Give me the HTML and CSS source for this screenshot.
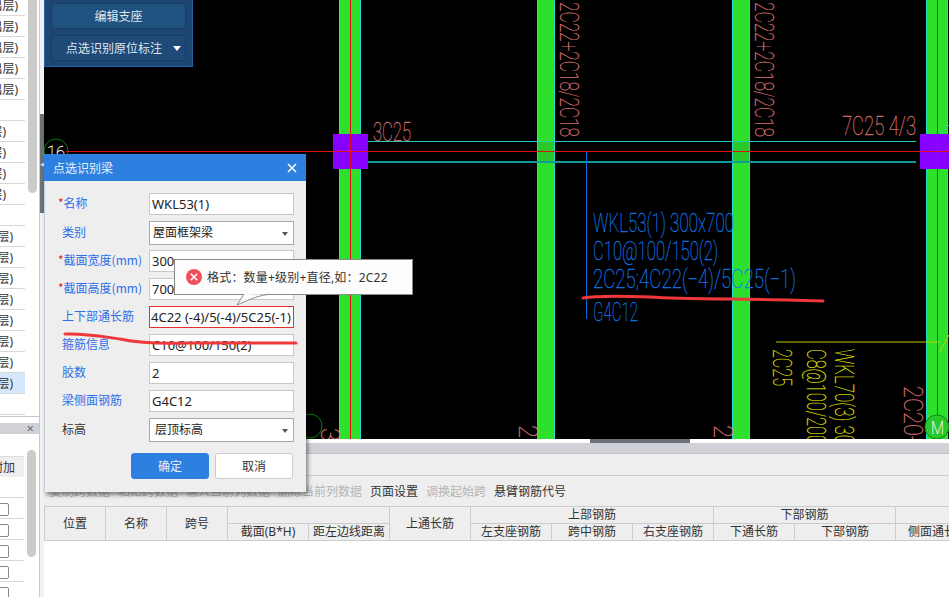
FILE: index.html

```html
<!DOCTYPE html>
<html lang="zh-CN">
<head>
  <meta charset="UTF-8">
  <title>点选识别梁</title>
  <link rel="stylesheet" href="styles.css">
</head>
<body>
  <div class="app">
    <aside class="sidebar">
      <div class="side-col">
        <div class="floor-box">
          <div class="floor-list">
            <div class="floor far">(出层)</div>
            <div class="floor far">(出层)</div>
            <div class="floor far">(出层)</div>
            <div class="floor far">(出层)</div>
            <div class="floor far">(出层)</div>
            <div class="floor"></div>
            <div class="floor near">(层)</div>
            <div class="floor near">(层)</div>
            <div class="floor near">(层)</div>
            <div class="floor near">(层)</div>
            <div class="floor"></div>
            <div class="floor mid">(层)</div>
            <div class="floor mid">(层)</div>
            <div class="floor mid">(层)</div>
            <div class="floor mid">(层)</div>
            <div class="floor mid">(层)</div>
            <div class="floor mid">(层)</div>
            <div class="floor mid">(层)</div>
            <div class="floor mid selected">(层)</div>
            <div class="floor"></div>
          </div>
          <div class="side-scroll top"></div>
        </div>
        <div class="panel-title"><span>×</span></div>
        <div class="extra-box">
          <div class="extra-list">
            <div class="extra-head">附加</div>
            <div class="extra-row"></div>
            <div class="extra-row"><i class="check"></i></div>
            <div class="extra-row"><i class="check"></i></div>
            <div class="extra-row"><i class="check"></i></div>
            <div class="extra-row"><i class="check"></i></div>
            <div class="extra-row"><i class="check"></i></div>
          </div>
          <div class="side-scroll bottom"></div>
        </div>
      </div>
      <div class="splitter"><div class="splitter-handle">◂</div></div>
    </aside>

    <main class="main">
      <div class="canvas">
        <svg class="cad" viewBox="44 0 905 439" width="905" height="439">
          <!-- columns -->
          <g class="col">
            <rect x="339.5" y="-2" width="21" height="445"/>
            <rect x="537.5" y="-2" width="17" height="445"/>
            <rect x="732.5" y="-2" width="17" height="445"/>
            <rect x="926.5" y="-2" width="21" height="445"/>
          </g>
          <g class="col-band">
            <rect x="538" y="142" width="16" height="20"/>
            <rect x="733" y="142" width="16" height="20"/>
          </g>
          <line class="beam-top" x1="368" y1="141.5" x2="916" y2="141.5"/>
          <line class="beam-bottom" x1="368" y1="162" x2="916" y2="162"/>
          <line class="axis" x1="66" y1="151.5" x2="949" y2="151.5"/>
          <line class="axis" x1="350.5" y1="0" x2="350.5" y2="439"/>
          <line class="axis" x1="937.5" y1="0" x2="937.5" y2="439"/>
          <rect class="pier" x="333" y="134" width="35" height="35"/>
          <rect class="pier" x="920" y="134" width="35" height="35"/>
          <line class="axis" x1="333" y1="151.5" x2="368" y2="151.5"/>
          <line class="axis" x1="920" y1="151.5" x2="949" y2="151.5"/>
          <line class="axis" x1="350.5" y1="134" x2="350.5" y2="169"/>
          <line class="axis" x1="937.5" y1="134" x2="937.5" y2="169"/>
          <line class="beam-top" x1="940" y1="134" x2="949" y2="125"/>

          <circle class="ring" cx="56" cy="151" r="12"/>
          <text class="cad-white" x="47" y="159" textLength="18" lengthAdjust="spacingAndGlyphs">16</text>
          <circle class="ring" cx="310" cy="426" r="12"/>

          <!-- rebar text -->
          <text class="cad-red" x="373" y="141" textLength="38" lengthAdjust="spacingAndGlyphs">3C25</text>
          <text class="cad-red" x="842" y="135" textLength="74" lengthAdjust="spacingAndGlyphs">7C25 4/3</text>
          <text class="cad-red" transform="translate(560,2) rotate(90)" textLength="135" lengthAdjust="spacingAndGlyphs">2C22+2C18/2C18</text>
          <text class="cad-red" transform="translate(755,2) rotate(90)" textLength="135" lengthAdjust="spacingAndGlyphs">2C22+2C18/2C18</text>
          <text class="cad-red" transform="translate(904,386) rotate(90)" textLength="62" lengthAdjust="spacingAndGlyphs">2C20+</text>
          <text class="cad-red" transform="translate(321,428) rotate(90)" textLength="26" lengthAdjust="spacingAndGlyphs">30</text>
          <text class="cad-red" transform="translate(519,425) rotate(90)" textLength="26" lengthAdjust="spacingAndGlyphs">20</text>
          <text class="cad-red" transform="translate(714,425) rotate(90)" textLength="26" lengthAdjust="spacingAndGlyphs">20</text>

          <line class="leader" x1="586.5" y1="152" x2="586.5" y2="319"/>
          <text class="cad-blue" x="593" y="232" textLength="141" lengthAdjust="spacingAndGlyphs">WKL53(1) 300x700</text>
          <text class="cad-blue" x="593" y="260" textLength="125" lengthAdjust="spacingAndGlyphs">C10@100/150(2)</text>
          <text class="cad-blue" x="593" y="288" textLength="203" lengthAdjust="spacingAndGlyphs">2C25;4C22(−4)/5C25(−1)</text>
          <text class="cad-blue" x="593" y="321" textLength="45" lengthAdjust="spacingAndGlyphs">G4C12</text>

          <line class="leader-y" x1="776" y1="342" x2="940" y2="342"/>
          <line class="leader-y" x1="939" y1="353" x2="949" y2="335"/>
          <text class="cad-yellow" transform="translate(773,349) rotate(90)" textLength="37" lengthAdjust="spacingAndGlyphs">2C25</text>
          <text class="cad-yellow" transform="translate(807,349) rotate(90)" textLength="95" lengthAdjust="spacingAndGlyphs">C8@100/200</text>
          <text class="cad-yellow" transform="translate(835,349) rotate(90)" textLength="95" lengthAdjust="spacingAndGlyphs">WKL70(3) 30</text>

          <circle class="ring ring-m" cx="937" cy="427" r="12"/>
          <text class="cad-white" x="931" y="434" textLength="13" lengthAdjust="spacingAndGlyphs">M</text>
        </svg>

        <div class="tool-panel">
          <button class="tool-btn">编辑支座</button>
          <button class="tool-btn with-arrow">点选识别原位标注<i class="tool-arrow"></i></button>
        </div>
      </div>

      <div class="strip"><div class="strip-handle"></div></div>
      <div class="grey-bar"></div>
      <div class="blank-bar"></div>
      <div class="toolbar">
        <span class="off">复制跨数据</span>
        <span class="off">粘贴跨数据</span>
        <span class="off">输入当前列数据</span>
        <span class="off">删除当前列数据</span>
        <span>页面设置</span>
        <span class="off">调换起始跨</span>
        <span>悬臂钢筋代号</span>
      </div>

      <table class="span-table">
        <colgroup>
          <col class="w61"><col class="w61"><col class="w61">
          <col class="w81"><col class="w81"><col class="w81">
          <col class="w81"><col class="w81"><col class="w81">
          <col class="w81"><col class="w101"><col class="w101">
        </colgroup>
        <tr>
          <th rowspan="2">位置</th>
          <th rowspan="2">名称</th>
          <th rowspan="2">跨号</th>
          <th colspan="2"></th>
          <th rowspan="2">上通长筋</th>
          <th colspan="3">上部钢筋</th>
          <th colspan="2">下部钢筋</th>
          <th></th>
        </tr>
        <tr>
          <th>截面(B*H)</th>
          <th>距左边线距离</th>
          <th>左支座钢筋</th>
          <th>跨中钢筋</th>
          <th>右支座钢筋</th>
          <th>下通长筋</th>
          <th>下部钢筋</th>
          <th class="clip">侧面通长筋</th>
        </tr>
      </table>
    </main>
  </div>

  <section class="dialog">
    <header class="dialog-title">
      <span>点选识别梁</span>
      <svg class="dialog-close" width="10" height="10" viewBox="0 0 10 10"><path d="M1 1l8 8M9 1l-8 8"/></svg>
    </header>
    <div class="form">
      <div class="form-row"><label><b>*</b>名称</label><input value="WKL53(1)"></div>
      <div class="form-row tight"><label>类别</label><div class="select">屋面框架梁<i></i></div></div>
      <div class="form-row"><label><b>*</b>截面宽度(mm)</label><input value="300"></div>
      <div class="form-row"><label><b>*</b>截面高度(mm)</label><input value="700"></div>
      <div class="form-row"><label>上下部通长筋</label><input class="error" value="4C22 (-4)/5(-4)/5C25(-1)"></div>
      <div class="form-row"><label>箍筋信息</label><input value="C10@100/150(2)"></div>
      <div class="form-row"><label>胶数</label><input value="2"></div>
      <div class="form-row"><label>梁侧面钢筋</label><input value="G4C12"></div>
      <div class="form-row"><label class="plain">标高</label><div class="select wide">层顶标高<i></i></div></div>
    </div>
    <div class="dialog-actions">
      <button class="btn primary">确定</button>
      <button class="btn">取消</button>
    </div>
    <div class="tip">
      <svg class="tip-icon" width="16" height="16" viewBox="0 0 16 16">
        <circle cx="8" cy="8" r="8"/>
        <path d="M4.8 4.8l6.4 6.4M11.2 4.8l-6.4 6.4"/>
      </svg>
      <span>格式：数量+级别+直径,如：2C22</span>
      <svg class="tip-tail" width="34" height="12" viewBox="0 0 34 12">
        <path d="M8 0L1 11C10 7 20 2 32 0.5"/>
      </svg>
    </div>
  </section>

  <svg class="marks" width="949" height="597" viewBox="0 0 949 597">
    <path d="M583 298C600 295 625 296 650 297C690 300 760 298 823 301"/>
    <path d="M65 334C85 333 105 337 120 339C140 343 160 344 185 343L296 343"/>
  </svg>
</body>
</html>
```

FILE: styles.css

```css
* {
  box-sizing: border-box;
}
html, body {
  margin: 0;
  height: 597px;
  overflow: hidden;
}
body {
  position: relative;
  width: 949px;
  background: #fff;
  color: #333;
  font-family: "Noto Sans", "Noto Sans CJK SC", sans-serif;
  font-size: 12px;
}
.app {
  display: flex;
  height: 597px;
}

/* left side */
.sidebar {
  display: flex;
  width: 44px;
  flex: none;
}
.side-col {
  width: 40px;
  border-right: 1px solid #c8c8c8;
  display: flex;
  flex-direction: column;
}
.floor-box {
  display: flex;
  flex: none;
  height: 417px;
  overflow: hidden;
  border-bottom: 1px solid #c8c8c8;
}
.floor-list {
  width: 25px;
  margin-top: -5px;
}
.floor {
  height: 21px;
  padding-top: 2px;
  border-bottom: 1px solid #d8d8d8;
  display: flex;
  justify-content: flex-end;
  white-space: nowrap;
  overflow: hidden;
  line-height: 18px;
}
.floor.far { padding-right: 7px; }
.floor.near { padding-right: 19px; }
.floor.mid { padding-right: 12px; }
.floor.selected { background: #d5e8fb; }
.side-scroll {
  width: 9px;
  margin-left: 3px;
  background: #cbcbcb;
  border-radius: 0 0 5px 5px;
}
.side-scroll.top { height: 193px; }
.side-scroll.bottom { height: 107px; margin-top: -6px; border-radius: 5px; }
.panel-title {
  flex: none;
  height: 11px;
  margin-top: 6px;
  background: #d0d2d8;
  text-align: right;
  padding-right: 5px;
  line-height: 10px;
  font-size: 13px;
  color: #666;
}
.extra-box {
  display: flex;
  flex: none;
  padding-top: 22px;
  background: #fff;
}
.extra-list {
  width: 24px;
  flex: none;
}
.extra-head {
  height: 21px;
  background: #eee;
  border-top: 1px solid #ddd;
  padding-right: 9px;
  line-height: 21px;
  white-space: nowrap;
  display: flex;
  justify-content: flex-end;
}
.extra-row {
  height: 21px;
  border-bottom: 1px solid #d8d8d8;
  position: relative;
  overflow: hidden;
}
.check {
  position: absolute;
  right: 15px;
  top: 5px;
  width: 13px;
  height: 13px;
  border: 1px solid #888;
  border-radius: 2px;
  background: #fff;
}
.splitter {
  width: 4px;
  background: #f2f2f2;
}
.splitter-handle {
  margin-top: 114px;
  height: 99px;
  background: #6c7278;
  color: #ddd;
  font-size: 9px;
  line-height: 100px;
  text-align: center;
  overflow: hidden;
}

/* drawing */
.main {
  width: 905px;
  flex: none;
  display: flex;
  flex-direction: column;
  overflow: hidden;
}
.canvas {
  position: relative;
  flex: none;
  height: 439px;
  background: #000;
  overflow: hidden;
}
.cad {
  display: block;
}
.cad text {
  font-family: Roboto, "Liberation Sans", sans-serif;
  font-weight: 100;
  font-size: 25px;
  stroke-width: 0.3;
}
.col rect {
  fill: #2ce02c;
  stroke: #28dcc4;
  stroke-width: 1;
}
.col-band rect { fill: #2ac82a; }
.beam-top { stroke: #22c8b8; stroke-width: 1; }
.beam-bottom { stroke: #0f9a9a; stroke-width: 2; }
.axis { stroke: #e01010; stroke-width: 1; }
.pier { fill: #8800ff; }
.ring { fill: none; stroke: #0c7a0c; stroke-width: 1; }
.ring-m { fill: #2ac82a; stroke: #0c8a0c; }
.leader { stroke: #0d6cd8; stroke-width: 1; }
.leader-y { stroke: #c8c800; stroke-width: 1; }
.cad-red { fill: #d87070; stroke: #d87070; }
.cad-blue { fill: #1078e8; stroke: #1078e8; }
.cad-yellow { fill: #d8d800; stroke: #d8d800; }
.cad-white { fill: #f4f4f4; stroke: #f4f4f4; font-size: 19px !important; }

.tool-panel {
  position: absolute;
  left: 0;
  top: -1px;
  width: 149px;
  height: 68px;
  background: #1d4674;
  border: 1px solid #27609e;
  padding: 3px 6px 0;
  display: flex;
  flex-direction: column;
  gap: 6px;
}
.tool-btn {
  position: relative;
  height: 26px;
  background: #20527f;
  border: 1px solid #183c62;
  border-radius: 3px;
  color: #dfe8f2;
  font: inherit;
  padding: 0;
}
.tool-btn.with-arrow {
  background: #1f4a78;
  padding-right: 23px;
  text-align: right;
}
.tool-arrow {
  position: absolute;
  right: 4px;
  top: 10px;
  border: 4px solid transparent;
  border-top: 5px solid #fff;
}

/* under the drawing */
.strip {
  flex: none;
  height: 4px;
  background: #fff;
  padding-left: 546px;
}
.strip-handle {
  width: 100px;
  height: 4px;
  background: #6c7278;
}
.grey-bar {
  flex: none;
  height: 11px;
  background: #d0d2d8;
  border-bottom: 1px solid #c0c2c8;
}
.blank-bar {
  flex: none;
  height: 22px;
  background: #eee;
  border-bottom: 1px solid #ccc;
}
.toolbar {
  flex: none;
  height: 30px;
  background: #eee;
  display: flex;
  align-items: center;
  gap: 8px;
  padding-left: 6px;
  white-space: nowrap;
}
.toolbar .off { color: #b4b4b4; }
.span-table {
  table-layout: fixed;
  border-collapse: collapse;
  width: 949px;
  border-left: 1px solid #ccc;
}
.w61 { width: 61px; }
.w81 { width: 81px; }
.w101 { width: 101px; }
.span-table th {
  height: 17px;
  padding: 0;
  background: #eee;
  border: 1px solid #ccc;
  font-weight: normal;
  line-height: 16px;
  white-space: nowrap;
  overflow: hidden;
}
.span-table th.clip { text-align: left; padding-left: 12px; }

/* dialog */
.dialog {
  position: absolute;
  left: 44px;
  top: 154px;
  width: 262px;
  height: 338px;
  background: #eee;
  border-left: 1px solid #c4cfdc;
  box-shadow: 2px 3px 4px rgba(0, 0, 0, 0.45);
}
.dialog-title {
  height: 27px;
  margin-left: -1px;
  background: #2d7fe0;
  color: #e8f1fc;
  font-size: 12px;
  display: flex;
  align-items: center;
  justify-content: space-between;
  padding: 0 9px;
}
.dialog-close path {
  stroke: #fff;
  stroke-width: 1.5;
  fill: none;
}
.form {
  display: flex;
  flex-direction: column;
  gap: 6px;
  padding-top: 12px;
}
.form-row {
  display: flex;
  align-items: center;
}
.form-row.tight { margin-bottom: -1px; }
.form-row label {
  width: 104px;
  padding-left: 17px;
  padding-bottom: 3px;
  color: #2d6fe8;
  font-family: "Noto Sans CJK SC", sans-serif;
  white-space: nowrap;
}
.form-row label b {
  color: #e02020;
  font-weight: normal;
  margin-left: -4px;
}
.form-row label.plain { color: #333; }
.form-row input {
  width: 145px;
  height: 22px;
  border: 1px solid #c8c8c8;
  background: #fff;
  padding: 0 2px;
  font: 13px "Noto Sans", sans-serif;
  color: #222;
  outline: none;
}
.form-row input.error { border-color: #e53030; padding: 0 1px; }
.select {
  position: relative;
  width: 145px;
  height: 24px;
  border: 1px solid #a8a8a8;
  background: #fff;
  padding-left: 3px;
  line-height: 22px;
  color: #222;
}
.select.wide { padding-left: 5px; }
.select i {
  position: absolute;
  right: 5px;
  top: 10px;
  border: 3px solid transparent;
  border-top: 4px solid #555;
}
.dialog-actions {
  display: flex;
  gap: 6px;
  padding: 11px 0 0 86px;
}
.btn {
  width: 78px;
  height: 26px;
  border: 1px solid #ccc;
  border-radius: 3px;
  background: #fff;
  color: #333;
  font: inherit;
  padding: 0;
}
.btn.primary {
  background: #2d7fe0;
  border-color: #2d7fe0;
  color: #e8f1fc;
}

/* error tip, sits over the form */
.tip {
  position: absolute;
  left: 129px;
  top: 105px;
  width: 239px;
  height: 36px;
  background: #fdfdfd;
  border: 1px solid #8a8a8a;
  display: flex;
  align-items: center;
  gap: 5px;
  padding-left: 11px;
  white-space: nowrap;
  letter-spacing: 0.2px;
  color: #333;
}
.tip-icon circle { fill: #f0505a; }
.tip-icon path { stroke: #fff; stroke-width: 1.6; fill: none; }
.tip-tail {
  position: absolute;
  left: 61px;
  top: 34px;
}
.tip-tail path {
  fill: #fdfdfd;
  stroke: #8a8a8a;
  stroke-width: 1;
}

.marks {
  position: absolute;
  left: 0;
  top: 0;
  pointer-events: none;
}
.marks path {
  fill: none;
  stroke: #f0383c;
  stroke-width: 3;
  stroke-linecap: round;
}
```
